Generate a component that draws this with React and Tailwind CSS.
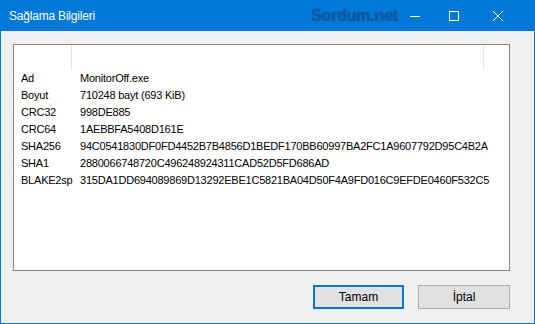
import React from 'react';

const rows = [
  ['Ad', 'MonitorOff.exe'],
  ['Boyut', '710248 bayt (693 KiB)'],
  ['CRC32', '998DE885'],
  ['CRC64', '1AEBBFA5408D161E'],
  ['SHA256', '94C0541830DF0FD4452B7B4856D1BEDF170BB60997BA2FC1A9607792D95C4B2A'],
  ['SHA1', '2880066748720C496248924311CAD52D5FD686AD'],
  ['BLAKE2sp', '315DA1DD694089869D13292EBE1C5821BA04D50F4A9FD016C9EFDE0460F532C5'],
];

export default function App() {
  return (
    <div className="w-[535px] h-[324px] bg-[#0078d7] px-px pb-px flex flex-col font-['Liberation_Sans',Arial,sans-serif] text-black">
      {/* title bar */}
      <div className="h-[31px] flex items-center text-white">
        <span className="ml-[8px] text-[12px] tracking-[-0.2px]">Sağlama Bilgileri</span>
        <span className="ml-auto text-[16px] font-bold text-[#0f5aa5] tracking-[-0.2px] [text-shadow:0_0_1px_#0a4a8c]">Sordum.net</span>
        <div className="w-[34px] h-[31px] flex items-center justify-center">
          <svg width="10" height="10" viewBox="0 0 10 10">
            <path d="M0 5.5H10" stroke="white" strokeWidth="1" />
          </svg>
        </div>
        <div className="w-[44px] h-[31px] flex items-center justify-center">
          <svg width="10" height="10" viewBox="0 0 10 10">
            <rect x="0.5" y="0.5" width="9" height="9" fill="none" stroke="white" strokeWidth="1" />
          </svg>
        </div>
        <div className="w-[44px] h-[31px] flex items-center justify-center">
          <svg width="10" height="10" viewBox="0 0 10 10">
            <path d="M0 0L10 10M10 0L0 10" stroke="white" strokeWidth="1" />
          </svg>
        </div>
        <div className="w-[14px]" />
      </div>

      {/* body */}
      <div className="flex-1 bg-[#f0f0f0] pl-[12px] pt-[13px] flex flex-col">
        <div className="w-[497px] h-[227px] border border-[#828790] bg-white flex flex-col">
          <div className="h-[25px] flex shrink-0">
            <div className="w-[58px] border-r border-[#e5e5e5]" />
            <div className="w-[412px] border-r border-[#e5e5e5]" />
          </div>
          <div className="flex flex-col text-[11px] tracking-[-0.22px]">
            {rows.map(([k, v]) => (
              <div key={k} className="h-[17px] flex items-center">
                <span className="pl-[7px] w-[66px]">{k}</span>
                <span>{v}</span>
              </div>
            ))}
          </div>
        </div>
        <div className="flex justify-end gap-[14px] mt-[14px] mr-[24px] text-[12px]">
          <button className="w-[91px] h-[24px] border-2 border-[#0078d7] bg-[#e1e1e1] flex items-center justify-center">Tamam</button>
          <button className="w-[92px] h-[24px] border border-[#adadad] bg-[#e1e1e1] flex items-center justify-center">İptal</button>
        </div>
      </div>
    </div>
  );
}
